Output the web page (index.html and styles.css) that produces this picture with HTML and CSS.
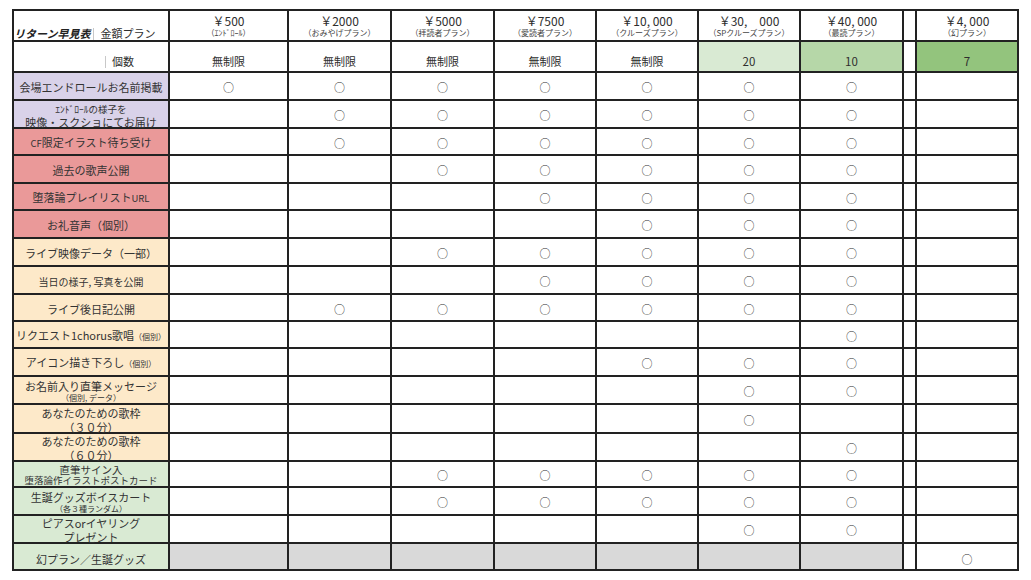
FILE: index.html
```html
<!DOCTYPE html>
<html lang="ja">
<head>
<meta charset="utf-8">
<title>リターン早見表</title>
<link rel="stylesheet" href="styles.css">
</head>
<body>
<table class="sheet">
  <colgroup>
    <col class="w-label"><col class="w-c1"><col class="w-c2"><col class="w-c3"><col class="w-c4"><col class="w-c5"><col class="w-c6"><col class="w-c7"><col class="w-gap"><col class="w-c8">
  </colgroup>
  <tr class="h31 head">
    <td class="corner"><span class="title">リターン早見表</span><span class="sep"></span><span>金額プラン</span></td>
    <td><div class="price">￥500</div><div class="sub">（ｴﾝﾄﾞﾛｰﾙ）</div></td>
    <td><div class="price">￥2000</div><div class="sub">（おみやげプラン）</div></td>
    <td><div class="price">￥5000</div><div class="sub">（拝読者プラン）</div></td>
    <td><div class="price">￥7500</div><div class="sub">（愛読者プラン）</div></td>
    <td><div class="price">￥10, 000</div><div class="sub">（クルーズプラン）</div></td>
    <td><div class="price">￥30,　000</div><div class="sub">（SPクルーズプラン）</div></td>
    <td><div class="price">￥40, 000</div><div class="sub">（最読プラン）</div></td>
    <td></td>
    <td><div class="price">￥4, 000</div><div class="sub">（幻プラン）</div></td>
  </tr>
  <tr class="h31 count">
    <td class="corner"><span class="count-pad"></span><span class="sep"></span><span>個数</span></td>
    <td>無制限</td><td>無制限</td><td>無制限</td><td>無制限</td><td>無制限</td>
    <td class="g1 num">20</td><td class="g2 num">10</td><td></td><td class="g3 num">7</td>
  </tr>
  <tr class="h28">
    <td class="lbl purple">会場エンドロールお名前掲載</td>
    <td>○</td><td>○</td><td>○</td><td>○</td><td>○</td><td>○</td><td>○</td><td></td><td></td>
  </tr>
  <tr class="h28">
    <td class="lbl purple"><div class="lab"><div class="ln wide"><span class="half">ｴﾝﾄﾞﾛｰﾙの様子を</span></div><div class="ln wide">映像・スクショにてお届け</div></div></td>
    <td></td><td>○</td><td>○</td><td>○</td><td>○</td><td>○</td><td>○</td><td></td><td></td>
  </tr>
  <tr class="h27">
    <td class="lbl red"><span class="half">CF</span>限定イラスト待ち受け</td>
    <td></td><td>○</td><td>○</td><td>○</td><td>○</td><td>○</td><td>○</td><td></td><td></td>
  </tr>
  <tr class="h28">
    <td class="lbl red">過去の歌声公開</td>
    <td></td><td></td><td>○</td><td>○</td><td>○</td><td>○</td><td>○</td><td></td><td></td>
  </tr>
  <tr class="h27">
    <td class="lbl red">堕落論プレイリスト<span class="half">URL</span></td>
    <td></td><td></td><td></td><td>○</td><td>○</td><td>○</td><td>○</td><td></td><td></td>
  </tr>
  <tr class="h28">
    <td class="lbl red">お礼音声（個別）</td>
    <td></td><td></td><td></td><td></td><td>○</td><td>○</td><td>○</td><td></td><td></td>
  </tr>
  <tr class="h28">
    <td class="lbl peach">ライブ映像データ（一部）</td>
    <td></td><td></td><td>○</td><td>○</td><td>○</td><td>○</td><td>○</td><td></td><td></td>
  </tr>
  <tr class="h28">
    <td class="lbl peach"><span class="mid">当日の様子, 写真を公開</span></td>
    <td></td><td></td><td></td><td>○</td><td>○</td><td>○</td><td>○</td><td></td><td></td>
  </tr>
  <tr class="h27">
    <td class="lbl peach">ライブ後日記公開</td>
    <td></td><td>○</td><td>○</td><td>○</td><td>○</td><td>○</td><td>○</td><td></td><td></td>
  </tr>
  <tr class="h27">
    <td class="lbl peach">リクエスト1chorus歌唱<span class="small">（個別）</span></td>
    <td></td><td></td><td></td><td></td><td></td><td></td><td>○</td><td></td><td></td>
  </tr>
  <tr class="h28">
    <td class="lbl peach">アイコン描き下ろし<span class="small">（個別）</span></td>
    <td></td><td></td><td></td><td></td><td>○</td><td>○</td><td>○</td><td></td><td></td>
  </tr>
  <tr class="h28">
    <td class="lbl peach"><div class="lab"><div class="ln">お名前入り直筆メッセージ</div><div class="ln small">（個別, データ）</div></div></td>
    <td></td><td></td><td></td><td></td><td></td><td>○</td><td>○</td><td></td><td></td>
  </tr>
  <tr class="h29">
    <td class="lbl peach"><div class="lab"><div class="ln wide">あなたのための歌枠</div><div class="ln wide">（３０分）</div></div></td>
    <td></td><td></td><td></td><td></td><td></td><td>○</td><td></td><td></td><td></td>
  </tr>
  <tr class="h28">
    <td class="lbl peach"><div class="lab"><div class="ln wide">あなたのための歌枠</div><div class="ln wide">（６０分）</div></div></td>
    <td></td><td></td><td></td><td></td><td></td><td></td><td>○</td><td></td><td></td>
  </tr>
  <tr class="h26">
    <td class="lbl green"><div class="lab"><div class="ln snug first">直筆サイン入</div><div class="ln snug second">堕落論作イラストポストカード</div></div></td>
    <td></td><td></td><td>○</td><td>○</td><td>○</td><td>○</td><td>○</td><td></td><td></td>
  </tr>
  <tr class="h28">
    <td class="lbl green"><div class="lab"><div class="ln">生誕グッズボイスカート</div><div class="ln small">（各３種ランダム）</div></div></td>
    <td></td><td></td><td>○</td><td>○</td><td>○</td><td>○</td><td>○</td><td></td><td></td>
  </tr>
  <tr class="h28">
    <td class="lbl green"><div class="lab"><div class="ln wide">ピアスorイヤリング</div><div class="ln wide">プレゼント</div></div></td>
    <td></td><td></td><td></td><td></td><td></td><td>○</td><td>○</td><td></td><td></td>
  </tr>
  <tr class="h27 last">
    <td class="lbl green">幻プラン／生誕グッズ</td>
    <td class="gray"></td><td class="gray"></td><td class="gray"></td><td class="gray"></td><td class="gray"></td><td class="gray"></td><td class="gray"></td><td></td><td>○</td>
  </tr>
</table>
</body>
</html>
```
FILE: styles.css
```css
html, body {
  margin: 0;
  padding: 0;
  background: #ffffff;
}
body {
  font-family: "Noto Sans CJK JP", "Noto Sans", sans-serif;
  color: #2e2e2e;
  font-size: 11px;
}
.sheet {
  margin: 9px 0 0 12px;
  border-collapse: collapse;
  table-layout: fixed;
  width: 1007px;
  border: 2px solid #222222;
}
.sheet td {
  box-sizing: border-box;
  border: 2px solid #222222;
  padding: 2px 0 0 0;
  text-align: center;
  vertical-align: middle;
  white-space: nowrap;
  line-height: 14px;
}
.w-label { width: 156px; }
.w-c1 { width: 119px; }
.w-c2 { width: 103px; }
.w-c3 { width: 103px; }
.w-c4 { width: 102px; }
.w-c5 { width: 102px; }
.w-c6 { width: 102px; }
.w-c7 { width: 103px; }
.w-gap { width: 13px; }
.w-c8 { width: 102px; }

.h31 td { height: 31px; }
.h29 td { height: 29px; }
.h28 td { height: 28px; }
.h27 td { height: 27px; }
.h26 td { height: 26px; }

.sheet tr.head td { padding: 0; }

.price { font-size: 12px; line-height: 14px; }
.sub { font-size: 8px; line-height: 10px; color: #444; }

.sheet td.corner {
  text-align: left;
  vertical-align: bottom;
  padding: 0 0 4px 6px;
}
.title {
  font-weight: bold;
  font-style: italic;
  color: #222;
}
.sep {
  display: inline-block;
  width: 0;
  height: 12px;
  border-left: 1px solid #c8c8c8;
  margin: 0 6px 0 3px;
  vertical-align: -2px;
}
.count-pad {
  display: inline-block;
  width: 82px;
}
.sheet tr.count td {
  vertical-align: bottom;
  padding: 0 0 3px 0;
}
.sheet tr.count td.corner { padding: 0 0 3px 6px; }
.sheet tr.count td.num { font-size: 11.5px; }

.lbl { color: #333; }
.lab {
  height: 22px;
  display: flex;
  flex-direction: column;
  justify-content: center;
  align-items: center;
}
.ln { line-height: 12px; height: 12px; }
.ln.wide { line-height: 14px; height: 14px; }
.ln.small { line-height: 11px; height: 11px; }
.ln.snug { line-height: 11.5px; height: 11.5px; }
.ln.first { font-size: 10.5px; }
.ln.second { font-size: 9.5px; }
.half { font-size: 9.5px; }
.small { font-size: 8px; }
.mid { font-size: 10px; }

.purple { background: #d9d2e9; }
.red { background: #ea9999; }
.peach { background: #fde9c9; }
.green { background: #d9ead3; }
.gray { background: #d9d9d9; }
.g1 { background: #d9ead3; }
.g2 { background: #b6d7a8; }
.g3 { background: #93c47d; }

.sheet tr.last td {
  vertical-align: bottom;
  padding: 0 0 3px 0;
}
```
